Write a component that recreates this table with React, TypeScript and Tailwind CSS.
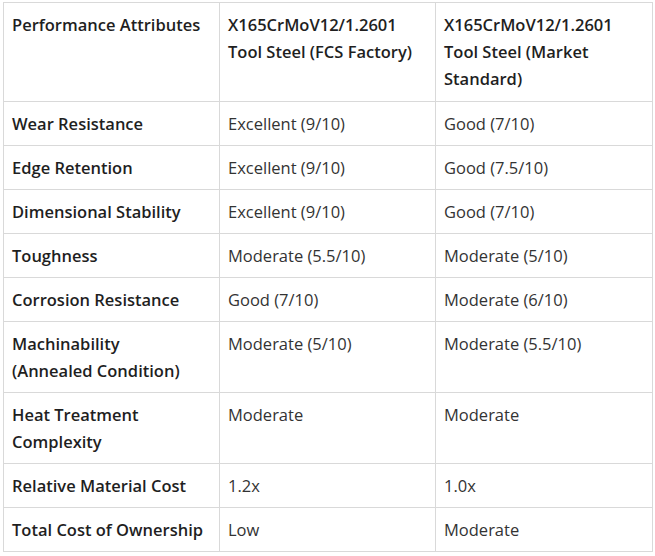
import React from "react";

const rows: [React.ReactNode, string, string][] = [
  ["Wear Resistance", "Excellent (9/10)", "Good (7/10)"],
  ["Edge Retention", "Excellent (9/10)", "Good (7.5/10)"],
  ["Dimensional Stability", "Excellent (9/10)", "Good (7/10)"],
  ["Toughness", "Moderate (5.5/10)", "Moderate (5/10)"],
  ["Corrosion Resistance", "Good (7/10)", "Moderate (6/10)"],
  [
    <>
      Machinability
      <br />
      (Annealed Condition)
    </>,
    "Moderate (5/10)",
    "Moderate (5.5/10)",
  ],
  ["Heat Treatment Complexity", "Moderate", "Moderate"],
  ["Relative Material Cost", "1.2x", "1.0x"],
  ["Total Cost of Ownership", "Low", "Moderate"],
];

export default function App() {
  return (
    <div
      className="bg-white w-[655px] h-[556px] pt-[2px] pl-[3px]"
      style={{ fontFamily: '"Open Sans", "Noto Sans", sans-serif' }}
    >
      <table className="border-collapse table-fixed w-[649px] text-[16.5px] leading-[27px] text-[#1f1f1f]">
        <colgroup>
          <col className="w-[216px]" />
          <col className="w-[216px]" />
          <col className="w-[217px]" />
        </colgroup>
        <thead>
          <tr>
            <th className="border border-[#d9d9d9] px-2 pt-2 pb-[9px] text-left align-top font-semibold">
              Performance Attributes
            </th>
            <th className="border border-[#d9d9d9] px-2 pt-2 pb-[9px] text-left align-top font-semibold">
              X165CrMoV12/1.2601 Tool Steel (FCS Factory)
            </th>
            <th className="border border-[#d9d9d9] px-2 pt-2 pb-[9px] text-left align-top font-semibold">
              X165CrMoV12/1.2601 Tool Steel (Market Standard)
            </th>
          </tr>
        </thead>
        <tbody>
          {rows.map((r, i) => (
            <tr key={i}>
              <td className="border border-[#d9d9d9] px-2 py-2 align-top font-semibold">{r[0]}</td>
              <td className="border border-[#d9d9d9] px-2 py-2 align-top text-[#333333]">{r[1]}</td>
              <td className="border border-[#d9d9d9] px-2 py-2 align-top text-[#333333]">{r[2]}</td>
            </tr>
          ))}
        </tbody>
      </table>
    </div>
  );
}
